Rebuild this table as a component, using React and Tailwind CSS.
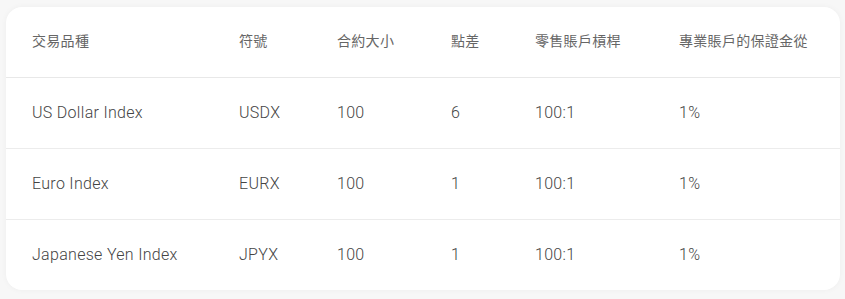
import React from "react";

const rows = [
  ["US Dollar Index", "USDX", "100", "6", "100:1", "1%"],
  ["Euro Index", "EURX", "100", "1", "100:1", "1%"],
  ["Japanese Yen Index", "JPYX", "100", "1", "100:1", "1%"],
];

const headers = ["交易品種", "符號", "合約大小", "點差", "零售賬戶槓桿", "專業賬戶的保證金從"];
const widths = ["w-[233px]", "w-[98px]", "w-[114px]", "w-[84px]", "w-[144px]", ""];

const App = () => {
  return (
    <div className="w-[845px] h-[299px] bg-[#f7f7f7] pt-[7px] pl-[6px] font-['Roboto','Noto_Sans_CJK_TC',sans-serif]">
      <div className="w-[834px] h-[283px] bg-white rounded-2xl shadow-[0_0_6px_rgba(0,0,0,0.04)] overflow-hidden">
        <table className="w-full border-collapse table-fixed">
          <thead>
            <tr className="h-[70px] border-b border-[#e8e8e8]">
              {headers.map((h, i) => (
                <th key={h} className={`${widths[i]} text-left font-normal text-[14px] tracking-[0.3px] text-[#666] ${i === 0 ? "pl-[26px]" : ""}`}>
                  {h}
                </th>
              ))}
            </tr>
          </thead>
          <tbody>
            {rows.map((row, r) => (
              <tr key={row[0]} className={`h-[71px] ${r < rows.length - 1 ? "border-b border-[#ececec]" : ""}`}>
                {row.map((cell, i) => (
                  <td key={i} className={`text-[16px] tracking-[0.3px] font-light text-[#444] ${i === 0 ? "pl-[26px]" : ""}`}>
                    {cell}
                  </td>
                ))}
              </tr>
            ))}
          </tbody>
        </table>
      </div>
    </div>
  );
};

export default App;
